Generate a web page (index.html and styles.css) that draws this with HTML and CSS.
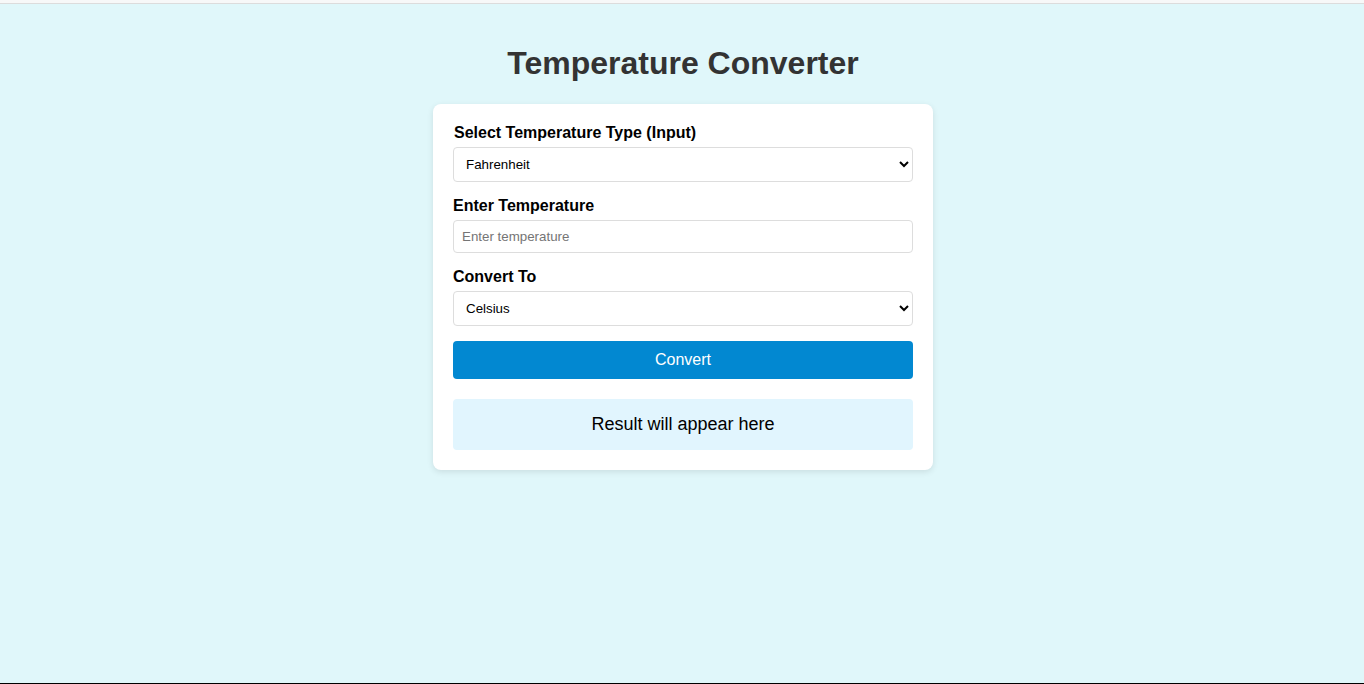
FILE: index.html
```html
<!DOCTYPE html>
<html lang="en">
<head>
<meta charset="utf-8">
<title>Temperature Converter</title>
<link rel="stylesheet" href="styles.css">
</head>
<body>
<div class="page">
  <div class="topbar"></div>
  <main class="main">
    <h1 class="title">Temperature Converter</h1>
    <div class="card">
      <label class="label label-first" for="from">Select Temperature Type (Input)</label>
      <select id="from" class="field">
        <option>Fahrenheit</option>
        <option>Celsius</option>
        <option>Kelvin</option>
      </select>
      <label class="label" for="temp">Enter Temperature</label>
      <input id="temp" class="field" type="number" placeholder="Enter temperature">
      <label class="label" for="to">Convert To</label>
      <select id="to" class="field">
        <option>Celsius</option>
        <option>Fahrenheit</option>
        <option>Kelvin</option>
      </select>
      <button class="btn" type="button">Convert</button>
      <div class="result">Result will appear here</div>
    </div>
  </main>
  <div class="bottombar"></div>
</div>
</body>
</html>
```

FILE: styles.css
```css
* { box-sizing: border-box; }
html, body { margin: 0; padding: 0; }
body {
  font-family: "Liberation Sans", Arial, sans-serif;
  background: #e0f7fa;
}
.page {
  height: 684px;
  display: flex;
  flex-direction: column;
}
.topbar {
  height: 4px;
  background: #f7f8f8;
  border-bottom: 1px solid #dcdcdc;
  flex: none;
}
.main {
  flex: 1;
  display: flex;
  flex-direction: column;
  align-items: center;
  padding-top: 41px;
  padding-left: 2px;
}
.bottombar {
  height: 1px;
  background: #000;
  flex: none;
}
.title {
  margin: 0 0 22px;
  font-size: 32px;
  line-height: 37px;
  font-weight: bold;
  color: #333;
}
.card {
  width: 500px;
  background: #fff;
  border-radius: 8px;
  box-shadow: 0 2px 6px rgba(0, 0, 0, 0.1);
  padding: 20px 20px 20px;
  display: flex;
  flex-direction: column;
}
.label {
  font-size: 16px;
  line-height: 18px;
  font-weight: bold;
  color: #000;
  margin-bottom: 5px;
}
.label-first { padding-left: 1px; }
.field {
  width: 100%;
  padding: 8px;
  border: 1px solid #ddd;
  border-radius: 4px;
  font-family: "Liberation Sans", Arial, sans-serif;
  font-size: 13.33px;
  color: #000;
  background: #fff;
  margin-bottom: 15px;
}
select.field { height: 35px; }
input.field { height: 33px; }
input.field::placeholder { color: #757575; }
.btn {
  width: 100%;
  height: 38px;
  border: none;
  border-radius: 4px;
  background: #0288d1;
  color: #fff;
  font-family: "Liberation Sans", Arial, sans-serif;
  font-size: 16px;
  padding: 0;
}
.result {
  margin-top: 20px;
  height: 51px;
  background: #e1f5fe;
  border-radius: 4px;
  display: flex;
  align-items: center;
  justify-content: center;
  font-size: 18px;
  color: #000;
}
```
